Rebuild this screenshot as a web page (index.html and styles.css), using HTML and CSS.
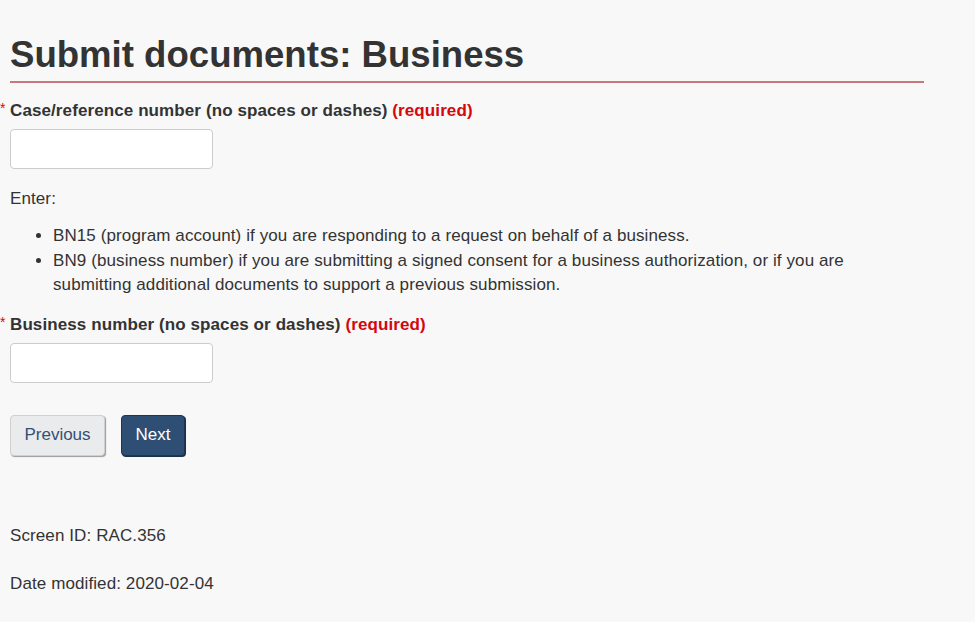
FILE: index.html
```html
<!DOCTYPE html>
<html lang="en">
<head>
<meta charset="utf-8">
<title>Submit documents: Business</title>
<link rel="stylesheet" href="styles.css">
</head>
<body>
<main class="page">
  <h1 class="title">Submit documents: Business</h1>
  <form class="form">
    <div class="field">
      <label class="label" for="case"><span class="star">*</span>Case/reference number (no spaces or dashes) <strong class="req">(required)</strong></label>
      <input class="input" id="case" type="text">
    </div>
    <p class="enter">Enter:</p>
    <ul class="list">
      <li>BN15 (program account) if you are responding to a request on behalf of a business.</li>
      <li>BN9 (business number) if you are submitting a signed consent for a business authorization, or if you are submitting additional documents to support a previous submission.</li>
    </ul>
    <div class="field field2">
      <label class="label" for="bn"><span class="star">*</span>Business number (no spaces or dashes) <strong class="req">(required)</strong></label>
      <input class="input" id="bn" type="text">
    </div>
    <div class="buttons">
      <button type="button" class="btn btn-default">Previous</button>
      <button type="button" class="btn btn-primary">Next</button>
    </div>
  </form>
  <p class="meta meta-first">Screen ID: RAC.356</p>
  <p class="meta">Date modified: 2020-02-04</p>
</main>
</body>
</html>
```
FILE: styles.css
```css
html, body {
  margin: 0;
  padding: 0;
  background: #f8f8f8;
}
body {
  font-family: "Liberation Sans", Arial, sans-serif;
  color: #333;
  font-size: 17px;
  letter-spacing: 0.1px;
}
.page {
  padding: 0 51px 0 10px;
}
.title {
  margin: 35px 0 0 0;
  font-size: 36.6px;
  line-height: 40px;
  letter-spacing: 0;
  font-weight: bold;
  color: #333;
  padding-bottom: 6px;
  border-bottom: 2px solid #c9777a;
}
.form {
  margin: 0;
}
.field {
  margin-top: 16px;
  display: flex;
  flex-direction: column;
  align-items: flex-start;
}
.label {
  position: relative;
  font-weight: bold;
  font-size: 17px;
  line-height: 23px;
}
.star {
  position: absolute;
  left: -10px;
  top: -2px;
  color: #d3080c;
  font-weight: normal;
  font-size: 14px;
}
.req {
  color: #d3080c;
}
.input {
  margin-top: 7px;
  width: 203px;
  height: 40px;
  box-sizing: border-box;
  border: 1px solid #ccc;
  border-radius: 4px;
  background: #fff;
  padding: 6px 12px;
  font: inherit;
}
.enter {
  margin: 18px 0 0 0;
  line-height: 23px;
}
.list {
  margin: 14px 0 0 0;
  padding: 0 40px 0 43px;
  line-height: 24.5px;
}
.field2 {
  margin-top: 15px;
}
.buttons {
  margin-top: 32px;
  display: flex;
  gap: 16px;
}
.btn {
  height: 41px;
  box-sizing: border-box;
  font-family: "Liberation Sans", Arial, sans-serif;
  font-size: 17px;
  border-radius: 4px;
  padding: 0 13px;
  cursor: pointer;
}
.btn-default {
  width: 95px;
  background: #eaebed;
  color: #335075;
  border: 1px solid #d0d0d0;
  box-shadow: 1px 1px 1px #999;
}
.btn-primary {
  width: 64px;
  background: #2f4e73;
  color: #fff;
  border: 1px solid #1f3553;
  box-shadow: 1px 1px 0 #1c2f47;
}
.meta {
  margin: 0;
  line-height: 23px;
}
.meta-first {
  margin-top: 68px;
}
.meta + .meta {
  margin-top: 25px;
}
```
